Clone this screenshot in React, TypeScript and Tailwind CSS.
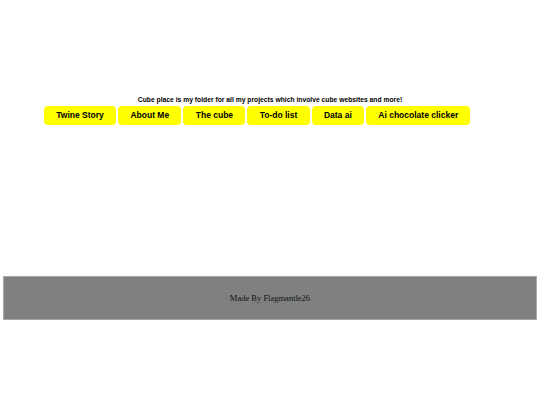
export default function App() {
  const items = ["Twine Story", "About Me", "The cube", "To-do list", "Data ai", "Ai chocolate clicker"];
  return (
    <div className="w-[540px] h-[405px] bg-white relative" style={{ fontFamily: '"Liberation Sans", Arial, sans-serif' }}>
      <div className="pt-[96px] text-center text-[6.75px] font-bold text-black leading-[8px]">
        Cube place is my folder for all my projects which involve cube websites and more!
      </div>
      <div className="flex gap-[2px] pl-[44px] mt-[2px]">
        {items.map((t) => (
          <div key={t} className="h-[19px] px-[12.3px] bg-[#ffff00] rounded-[4px] text-[8.5px] font-bold text-black flex items-center justify-center">
            {t}
          </div>
        ))}
      </div>
      <div className="mt-[151px] mx-[3px] h-[44px] bg-[#808080] border border-[#a8a8a8] flex items-center justify-center text-[8.5px] text-[#111]" style={{ fontFamily: '"Liberation Serif", "Times New Roman", serif' }}>
        <span className="mt-[1px]">Made By Flagmantle26</span>
      </div>
    </div>
  );
}
